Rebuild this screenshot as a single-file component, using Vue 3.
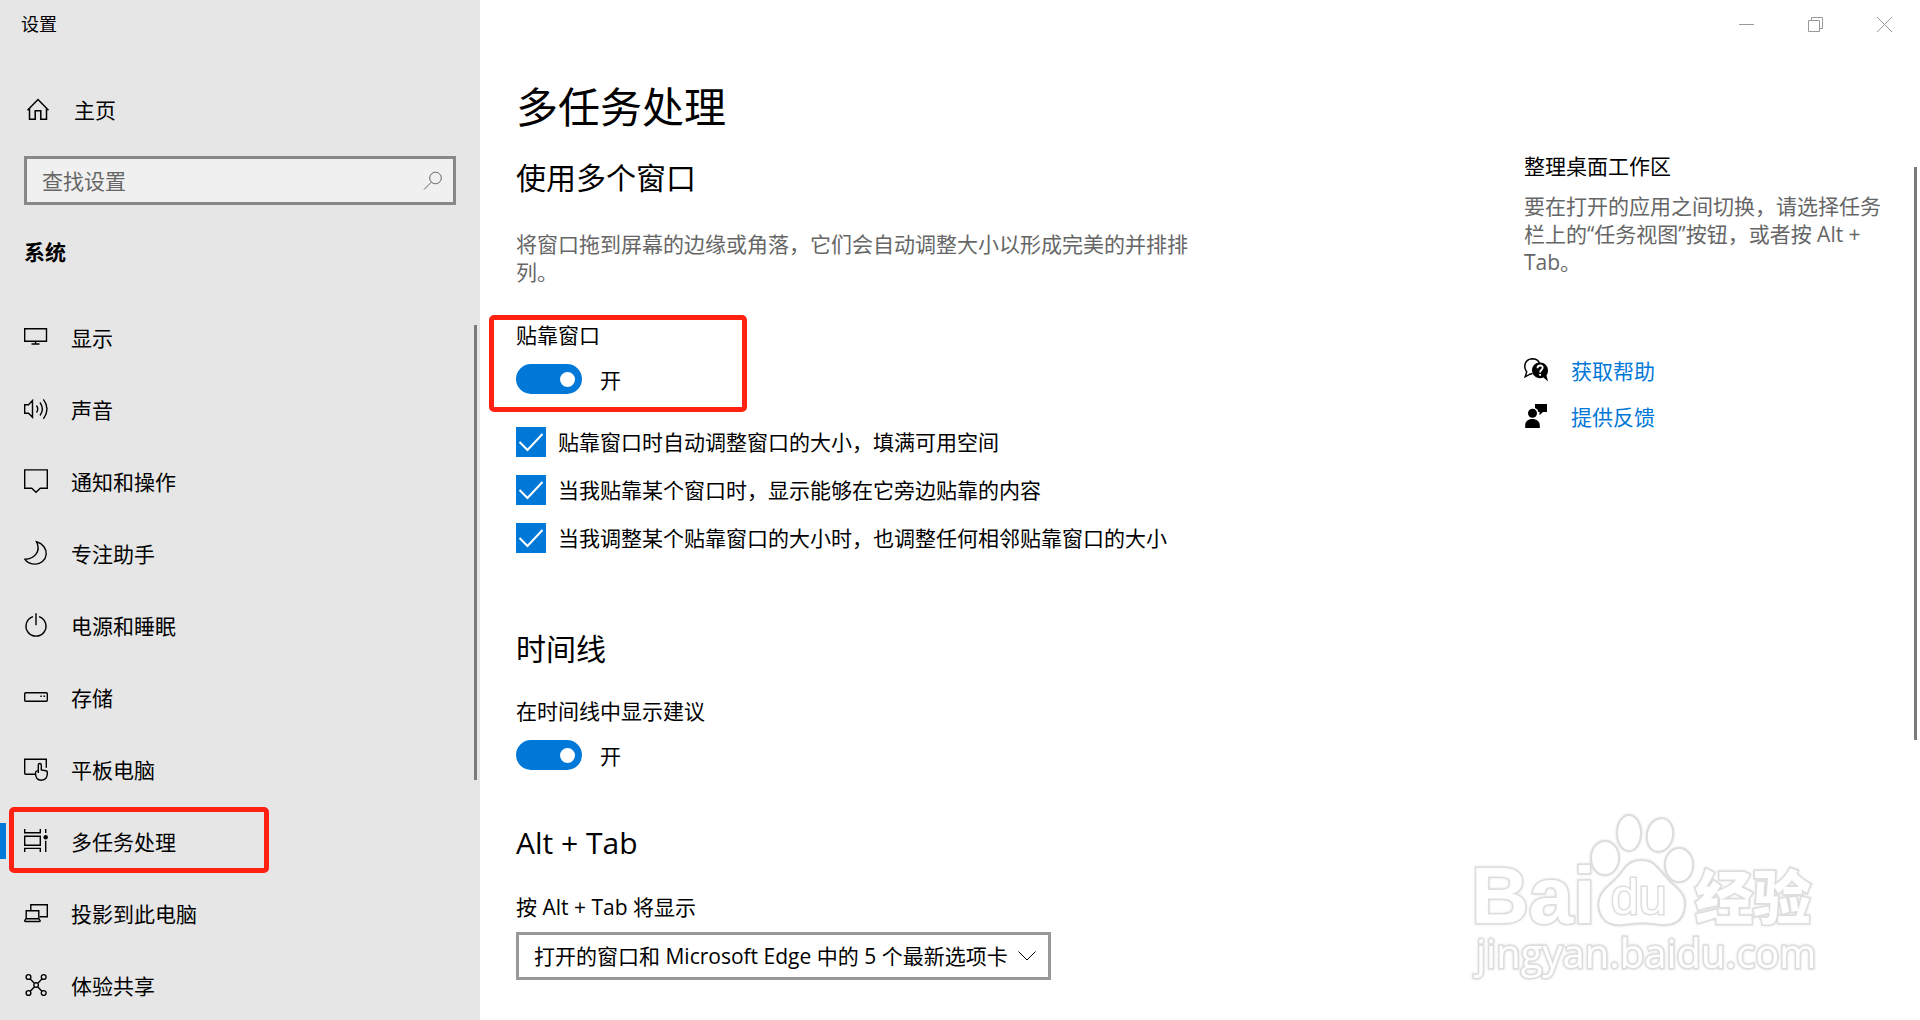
<script setup>
import { ref } from 'vue'

// --- 左侧导航 ---
const navItems = [
  { key: 'display', label: '显示', path: 'M.7 4.7h21.8v12.6H.7zM11.5 17.3V20M7.5 20h8' },
  { key: 'sound', label: '声音', path: 'M.7 8.7h3.8l4-4.2v16.8l-4-4H.7zM12.5 9.5q2.5 3.5 0 7M16 6.5q4.8 6.5 0 13M19.4 3.4q7.2 9.6 0 19.4' },
  { key: 'notify', label: '通知和操作', path: 'M.7 1.9h22.6v18.4h-7L12 24.2l-4.3-3.9h-7z' },
  { key: 'focus', label: '专注助手', path: 'M12.5 1.8C19 3.5 22.7 9 22.2 14.5 21.5 20.5 16.5 24.2 11.5 24.1 7 24.1 3 22.5 1 19.3 10 18.5 17.5 12 12.5 1.8z' },
  { key: 'power', label: '电源和睡眠', path: 'M9 4.6a10 10 0 1 0 6 0M12 1.2v12' },
  { key: 'storage', label: '存储', path: 'M1.7 8.8h20.6q1 0 1 1v6.4q0 1-1 1H1.7q-1 0-1-1V9.8q0-1 1-1zM16.3 12.3h1.5M19.5 12.3h1.5' },
  { key: 'tablet', label: '平板电脑', path: 'M11 18.3H1.7q-1 0-1-1V3.3h21.6v8.5M14.3 17V9q0-1.5 1.5-1.5T17.3 9v5l4.6.8q1.6.4 1.5 2c0 4.5-1.7 7.4-6.2 7.4-4 0-5.7-2.5-5.7-7.2q0-2.5 2.8-2' },
  { key: 'multitask', label: '多任务处理', path: 'M.7 1v3.7h15.6V1M.7 8.2h15.6v9H.7zM.7 24v-3.6h15.6V24M21.7 1v4M21.7 12.7V24', dot: true },
  { key: 'project', label: '投影到此电脑', path: 'M6.8 10V4.8h16.5v12h-7.5M2.2 10.7h12.6v8H2.2zM2 18.7l-1.3 2q0 .8 1 .8h13.5q1 0 1-.8l-1.4-2' },
  { key: 'share', label: '体验共享', path: 'M6.3 7l4 4.2M17.9 7l-4 4.2M6.3 19.3l4-4.3M17.9 19.3l-4-4.3M2.1 5a2.4 2.4 0 1 0 4.8 0 2.4 2.4 0 1 0-4.8 0M17.3 5a2.4 2.4 0 1 0 4.8 0 2.4 2.4 0 1 0-4.8 0M2.1 21a2.4 2.4 0 1 0 4.8 0 2.4 2.4 0 1 0-4.8 0M17.3 21a2.4 2.4 0 1 0 4.8 0 2.4 2.4 0 1 0-4.8 0M9.8 13a2.3 2.3 0 1 0 4.6 0 2.3 2.3 0 1 0-4.6 0' },
]
const activeKey = ref('multitask')
const keyword = ref('')

// --- 贴靠窗口 ---
const snapOn = ref(true)
const snapOptions = ref([
  { id: 'snap-fill', label: '贴靠窗口时自动调整窗口的大小，填满可用空间', checked: true },
  { id: 'snap-assist', label: '当我贴靠某个窗口时，显示能够在它旁边贴靠的内容', checked: true },
  { id: 'snap-resize', label: '当我调整某个贴靠窗口的大小时，也调整任何相邻贴靠窗口的大小', checked: true },
])

// --- 时间线 ---
const timelineOn = ref(true)

// --- Alt + Tab ---
const altTabOptions = [
  '打开的窗口和 Microsoft Edge 中的 5 个最新选项卡',
  '仅打开的窗口',
]
const altTab = ref(altTabOptions[0])
</script>

<template>
  <div class="settings">
    <aside class="sidebar">
      <div class="app-name">设置</div>

      <a href="#" class="home" @click.prevent>
        <svg class="home-icon" viewBox="0 0 26 26">
          <path d="M1.5 13.3 12 2.5l10.5 10.8M3.5 11.8v10.4h5.7v-8.5h5.6v8.5h5.7V11.8" />
        </svg>
        <span>主页</span>
      </a>

      <div class="search">
        <input v-model="keyword" type="text" placeholder="查找设置" aria-label="查找设置">
        <svg class="search-icon" viewBox="0 0 20 20">
          <circle cx="12.5" cy="7" r="5.8" />
          <path d="M8.3 11.2 1 18.5" />
        </svg>
      </div>

      <h2 class="category">系统</h2>

      <nav class="nav">
        <a
          v-for="item in navItems"
          :key="item.key"
          href="#"
          class="nav-item"
          :class="{ active: item.key === activeKey }"
          @click.prevent="activeKey = item.key"
        >
          <svg class="nav-icon" viewBox="0 0 24 24">
            <path :d="item.path" />
            <circle v-if="item.dot" class="solid" cx="21.7" cy="9.3" r="2.2" />
          </svg>
          <span>{{ item.label }}</span>
        </a>
        <i class="scroll-thumb nav-thumb"></i>
      </nav>
    </aside>

    <main class="main">
      <header class="window-bar">
        <button type="button" aria-label="最小化">
          <svg viewBox="0 0 15 15"><path d="M0 7.5h15" /></svg>
        </button>
        <button type="button" aria-label="还原">
          <svg viewBox="0 0 15 15"><path d="M.5 3.5h11v11H.5zM3.5 3.5v-3h11v11h-3" /></svg>
        </button>
        <button type="button" aria-label="关闭">
          <svg viewBox="0 0 15 15"><path d="M0 0l15 15M15 0L0 15" /></svg>
        </button>
      </header>

      <div class="body">
        <div class="content">
          <h1>多任务处理</h1>

          <section>
            <h2>使用多个窗口</h2>
            <p class="desc">将窗口拖到屏幕的边缘或角落，它们会自动调整大小以形成完美的并排排列。</p>
            <div class="toggle-group marked">
              <label for="snap">贴靠窗口</label>
              <div class="toggle-row">
                <input id="snap" v-model="snapOn" type="checkbox" class="toggle">
                <span>{{ snapOn ? '开' : '关' }}</span>
              </div>
            </div>
            <div class="checks">
              <label v-for="opt in snapOptions" :key="opt.id" :for="opt.id" class="check">
                <span class="check-box">
                  <input :id="opt.id" v-model="opt.checked" type="checkbox">
                  <svg v-if="opt.checked" viewBox="0 0 30 30"><path d="M3.5 15l8 8L26.5 7" /></svg>
                </span>
                <span>{{ opt.label }}</span>
              </label>
            </div>
          </section>

          <section class="timeline">
            <h2>时间线</h2>
            <div class="toggle-group">
              <label for="timeline">在时间线中显示建议</label>
              <div class="toggle-row">
                <input id="timeline" v-model="timelineOn" type="checkbox" class="toggle">
                <span>{{ timelineOn ? '开' : '关' }}</span>
              </div>
            </div>
          </section>

          <section class="alt-tab">
            <h2>Alt + Tab</h2>
            <label for="alt-tab">按 Alt + Tab 将显示</label>
            <div class="select-wrap">
              <select id="alt-tab" v-model="altTab">
                <option v-for="opt in altTabOptions" :key="opt">{{ opt }}</option>
              </select>
              <svg class="chevron" viewBox="0 0 18 10"><path d="M.5.5 9 9l8.5-8.5" /></svg>
            </div>
          </section>
        </div>

        <aside class="related">
          <h3>整理桌面工作区</h3>
          <p>要在打开的应用之间切换，请选择任务栏上的“任务视图”按钮，或者按 Alt + Tab。</p>
          <a href="#" class="help-link" @click.prevent>
            <svg viewBox="0 0 24 24">
              <path class="line" d="M8.5 15.5l-2.5.7-4.8 2.6 1.5-4.8C-1 9 .8 1 8.3.7c3.5 0 6.2 1.8 7.2 4.3" />
              <path d="M16 4.5c-4.5 0-8 3.4-8 7.8s3.5 7.9 8 7.9c1.3 0 2.5-.3 3.5-.8l4.5 4-1.5-6c1-1.4 1.5-3.1 1.5-5.1 0-4.4-3.5-7.8-8-7.8z" />
              <path class="mark" d="M13.5 10.2c0-3.6 5.2-3.5 5.2-.4 0 2-2.6 2-2.6 4.6M16.1 16v1.8" />
            </svg>
            <span>获取帮助</span>
          </a>
          <a href="#" class="help-link" @click.prevent>
            <svg viewBox="0 0 24 24">
              <circle cx="8.5" cy="9.2" r="4.5" />
              <path d="M1.2 24v-2.5c0-4 2.8-6.5 7.2-6.5s7.4 2.5 7.4 6.5V24zM11 0h12v8h-4l-3.5 3.2V8h-1.2c-.3-2-1.4-3.3-3.3-4z" />
            </svg>
            <span>提供反馈</span>
          </a>
        </aside>
      </div>
      <i class="scroll-thumb main-thumb"></i>
    </main>

    <svg class="watermark" viewBox="0 0 360 180" aria-hidden="true">
      <text class="wm-bold" x="1" y="113">Bai</text>
      <ellipse cx="135" cy="48" rx="14" ry="17" />
      <ellipse cx="159" cy="23" rx="12" ry="18" />
      <ellipse cx="190" cy="25" rx="13" ry="17" transform="rotate(12 190 25)" />
      <ellipse cx="209" cy="55" rx="14" ry="17" />
      <path d="M171 50c-9 0-14 4-18 10-5 8-10 11-16 17-9 8-10 18-7 26 4 10 13 13 23 12 12-1 16-3 30-1 17 3 28 0 31-13 3-13-2-19-9-25-9-7-11-12-17-18-5-6-9-8-17-8z" />
      <text class="wm-du" x="141" y="104">du</text>
      <text class="wm-cjk" x="225" y="109">经验</text>
      <text class="wm-url" x="6" y="158">jingyan.baidu.com</text>
    </svg>
  </div>
</template>

<style>
body {
  margin: 0;
  background: #fff;
}
</style>

<style scoped>
.settings {
  position: relative;
  display: grid;
  grid-template-columns: 480px 1fr;
  height: 100vh;
  overflow: hidden;
  color: #000;
  font-family: "Open Sans", "Noto Sans CJK SC", sans-serif;
  font-size: 21px;
  font-weight: 380;
  line-height: 28px;
}

.settings *,
.settings *::before,
.settings *::after {
  box-sizing: border-box;
}

a {
  color: inherit;
  text-decoration: none;
}

h1, h2, h3, p {
  margin: 0;
  font-weight: inherit;
}

svg {
  flex: none;
  overflow: visible;
  fill: none;
  stroke: currentColor;
}

input, select, button {
  margin: 0;
  font: inherit;
  color: inherit;
}

/* 左侧栏 */
.sidebar {
  min-height: 0;
  background: #e6e6e6;
}

.app-name {
  padding: 10px 21px 0;
  font-size: 18px;
}

.home {
  display: flex;
  align-items: center;
  gap: 22px;
  margin-top: 56px;
  padding: 0 26px;
  height: 32px;
}

.home-icon {
  width: 26px;
  height: 26px;
  stroke-width: 1.5;
}

.search {
  display: flex;
  align-items: center;
  height: 49px;
  margin: 30px 24px 0;
  padding: 0 10px 0 15px;
  border: 3px solid #888;
  background: #f0f0f0;
}

.search input {
  flex: 1;
  min-width: 0;
  padding: 0;
  border: 0;
  outline: none;
  background: none;
}

.search input::placeholder {
  color: #666;
}

.search-icon {
  width: 20px;
  height: 20px;
  color: #666;
}

.category {
  margin: 33px 24px 0;
  font-size: 21px;
  font-weight: bold;
}

.nav {
  position: relative;
  margin-top: 36px;
}

.nav-item {
  position: relative;
  display: flex;
  align-items: center;
  gap: 23px;
  height: 72px;
  padding: 0 24px;
}

.nav-icon {
  width: 24px;
  height: 24px;
  margin-bottom: 4px;
  stroke-width: 1.4;
}

.nav-icon .solid {
  fill: currentColor;
  stroke: none;
}

.nav-item.active::before {
  content: "";
  position: absolute;
  left: 0;
  top: 17px;
  width: 6px;
  height: 36px;
  background: #0078d7;
}

.nav-item.active::after {
  content: "";
  position: absolute;
  left: 9px;
  top: 1px;
  width: 260px;
  height: 66px;
  border: 5px solid #ff2112;
  border-radius: 5px;
}

.scroll-thumb {
  position: absolute;
  width: 3px;
  background: #7a7a7a;
}

.nav-thumb {
  top: 23px;
  right: 3px;
  height: 455px;
}

/* 主区域 */
.main {
  position: relative;
  min-width: 0;
}

.main-thumb {
  top: 167px;
  right: 3px;
  height: 573px;
}

.window-bar {
  display: flex;
  justify-content: flex-end;
  height: 48px;
  padding-right: 1px;
}

.window-bar button {
  display: grid;
  place-items: center;
  width: 69px;
  padding: 0;
  border: 0;
  background: none;
  color: #999;
}

.window-bar svg {
  width: 15px;
  height: 15px;
}

.body {
  display: flex;
  justify-content: space-between;
  padding: 31px 36px 0;
}

.content {
  width: 680px;
}

h1 {
  font-size: 42px;
  line-height: 56px;
}

.content h2 {
  margin-top: 23px;
  font-size: 30px;
  line-height: 40px;
}

.desc {
  margin-top: 32px;
  color: #666;
}

.toggle-group {
  position: relative;
  display: flex;
  flex-direction: column;
  gap: 15px;
  margin-top: 28px;
}

.toggle-group.marked {
  margin-top: 35px;
}

.toggle-group.marked::after {
  content: "";
  position: absolute;
  left: -27px;
  top: -6px;
  width: 258px;
  height: 97px;
  border: 5px solid #ff2112;
  border-radius: 5px;
  pointer-events: none;
}

.toggle-row {
  display: flex;
  align-items: center;
  gap: 18px;
  height: 30px;
}

.toggle-row span {
  padding-top: 2px;
}

.toggle {
  appearance: none;
  display: flex;
  align-items: center;
  width: 66px;
  height: 30px;
  padding: 0 7px;
  border-radius: 15px;
  background: #999;
}

.toggle::before {
  content: "";
  width: 15px;
  height: 15px;
  border-radius: 50%;
  background: #fff;
}

.toggle:checked {
  justify-content: flex-end;
  background: #0078d7;
}

.checks {
  display: flex;
  flex-direction: column;
  gap: 18px;
  margin-top: 33px;
}

.check {
  display: flex;
  align-items: center;
  gap: 12px;
  height: 30px;
  white-space: nowrap;
}

.check-box {
  display: grid;
}

.check-box input,
.check-box svg {
  grid-area: 1 / 1;
  width: 30px;
  height: 30px;
}

.check-box input {
  appearance: none;
  border: 3px solid #666;
}

.check-box input:checked {
  border: 0;
  background: #0078d7;
}

.check-box svg {
  color: #fff;
  stroke-width: 2;
  pointer-events: none;
}

.timeline {
  padding-top: 53px;
}

.alt-tab {
  display: flex;
  flex-direction: column;
  align-items: flex-start;
  padding-top: 30px;
}

.alt-tab label {
  margin-top: 30px;
}

.select-wrap {
  position: relative;
  margin-top: 11px;
}

select {
  appearance: none;
  width: 535px;
  height: 48px;
  padding: 0 40px 0 15px;
  border: 3px solid #999;
  border-radius: 0;
  background: #fff;
}

.chevron {
  position: absolute;
  top: 19px;
  right: 15px;
  width: 18px;
  height: 10px;
  pointer-events: none;
}

/* 右侧相关信息 */
.related {
  width: 360px;
  padding-top: 73px;
}

.related h3 {
  font-size: 21px;
}

.related p {
  margin-top: 12px;
  margin-bottom: 72px;
  color: #666;
}

.help-link {
  display: flex;
  align-items: center;
  gap: 23px;
  height: 46px;
  color: #0078d7;
}

.help-link svg {
  width: 24px;
  height: 24px;
  margin-bottom: 3px;
  color: #000;
  fill: currentColor;
  stroke: none;
}

.help-link .line {
  fill: none;
  stroke: currentColor;
  stroke-width: 1.5;
}

.help-link .mark {
  fill: none;
  stroke: #fff;
  stroke-width: 1.8;
}

/* 水印 */
.watermark {
  position: absolute;
  right: 90px;
  bottom: 30px;
  width: 360px;
  height: 180px;
  fill: #fff;
  stroke: #ddd;
  stroke-width: 2;
  filter: drop-shadow(0 0 1px #ddd);
  pointer-events: none;
}

.watermark text {
  paint-order: stroke;
  stroke-width: 3;
}

.wm-bold {
  font: bold 80px "Liberation Sans", sans-serif;
}

.wm-du {
  font: 50px "Liberation Sans", sans-serif;
}

.wm-cjk {
  font: 900 58px "Noto Sans CJK SC", sans-serif;
}

.wm-url {
  font: 40px "Open Sans", sans-serif;
}
</style>
